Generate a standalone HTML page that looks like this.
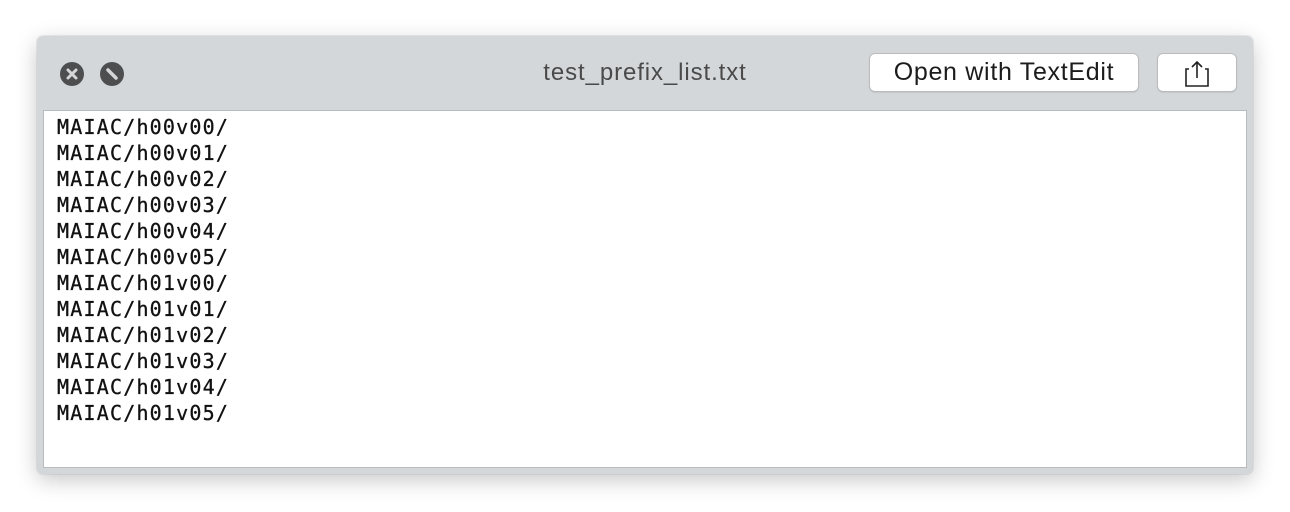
<!DOCTYPE html>
<html><head><style>
body{margin:0;width:1290px;height:512px;background:#fff;position:relative;overflow:hidden;font-family:"Liberation Sans",sans-serif}
.win{position:absolute;left:37px;top:36px;width:1216px;height:438px;background:#d4d7da;border-radius:6px;box-shadow:0 6px 22px rgba(0,0,0,.22),0 0 0 1px rgba(0,0,0,.06)}
.content{position:absolute;left:6px;top:74px;width:1202px;height:356px;background:#fff;border:1px solid #b9bcbf}
.txt{position:absolute;left:13px;top:3px;font-family:"DejaVu Sans Mono",monospace;font-size:20px;letter-spacing:1.2px;line-height:26px;color:#111;white-space:pre;-webkit-text-stroke:0.3px #111}
.title{position:absolute;left:0;width:1216px;top:23px;text-align:center;font-size:24px;letter-spacing:0.9px;color:#4a4a4a}
.btn{position:absolute;top:17px;height:39px;background:#fff;border:1px solid #b9bbbd;border-radius:6px;box-sizing:border-box;box-shadow:0 1px 1px rgba(0,0,0,.08)}
.b1{left:832px;width:270px;font-size:25px;letter-spacing:0.7px;text-align:center;line-height:37px;color:#1c1c1c}
.b2{left:1120px;width:80px}
.ic{position:absolute;top:26px;width:24px;height:24px;border-radius:50%;background:#4d4e50}
</style></head><body>
<div class="win">
<div class="ic" style="left:23px"><svg width="24" height="24"><path d="M8 8L16 16M16 8L8 16" stroke="#d4d7da" stroke-width="3" stroke-linecap="round"/></svg></div>
<div class="ic" style="left:63px"><svg width="24" height="24"><path d="M8 8L16 16" stroke="#d4d7da" stroke-width="3.5" stroke-linecap="round"/></svg></div>
<div class="title">test_prefix_list.txt</div>
<div class="btn b1">Open with TextEdit</div>
<div class="btn b2"><svg width="78" height="37"><path d="M31 15H28V32H50V15H47M39 24V8M34 13L39 8L44 13" fill="none" stroke="#222" stroke-width="1.6"/></svg></div>
<div class="content"><div class="txt">MAIAC/h00v00/
MAIAC/h00v01/
MAIAC/h00v02/
MAIAC/h00v03/
MAIAC/h00v04/
MAIAC/h00v05/
MAIAC/h01v00/
MAIAC/h01v01/
MAIAC/h01v02/
MAIAC/h01v03/
MAIAC/h01v04/
MAIAC/h01v05/</div></div>
</div>
</body></html>
